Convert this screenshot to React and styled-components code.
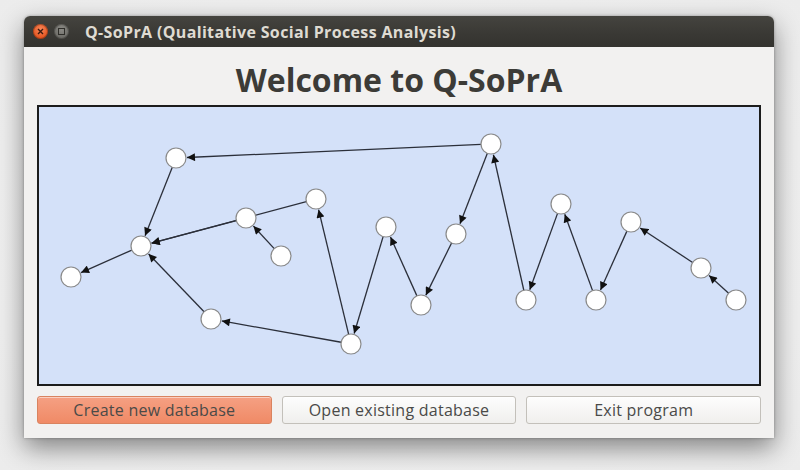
import React from 'react'
import styled, { createGlobalStyle } from 'styled-components'

const GlobalStyle = createGlobalStyle`
  html, body {
    margin: 0;
    padding: 0;
    background: #efefef;
  }
  body {
    font-family: 'Open Sans', 'DejaVu Sans', sans-serif;
  }
`

const nodes = [
  [137, 51],
  [452, 37],
  [207, 111],
  [277, 92],
  [102, 139],
  [242, 149],
  [32, 170],
  [347, 120],
  [417, 127],
  [172, 212],
  [312, 237],
  [382, 198],
  [522, 97],
  [592, 115],
  [487, 193],
  [557, 193],
  [662, 161],
  [697, 193]
]

// pairs of node indexes, arrow drawn at the second one
const edges = [
  [1, 0],
  [0, 4],
  [3, 4],
  [2, 4],
  [5, 2],
  [4, 6],
  [9, 4],
  [10, 9],
  [10, 3],
  [7, 10],
  [11, 7],
  [8, 11],
  [1, 8],
  [14, 1],
  [12, 14],
  [15, 12],
  [13, 15],
  [16, 13],
  [17, 16]
]

const R = 10

const Page = styled.div`
  width: 800px;
  height: 470px;
  box-sizing: border-box;
  padding: 16px 26px 32px 24px;
  background: radial-gradient(ellipse at center, #f4f4f4 0%, #ececec 100%);
`

const Window = styled.div`
  display: flex;
  flex-direction: column;
  height: 100%;
  border-radius: 6px 6px 0 0;
  box-shadow: 0 10px 26px rgba(0, 0, 0, 0.45), 0 0 3px rgba(0, 0, 0, 0.3);
  background: #f2f1f0;
`

const TitleBar = styled.div`
  display: flex;
  align-items: center;
  height: 31px;
  padding: 0 0 0 9px;
  border-radius: 6px 6px 0 0;
  background: linear-gradient(#45443f, #393834 60%, #34332f);
`

const Controls = styled.div`
  display: flex;
  gap: 6px;
  margin-right: 16px;
`

const CircleButton = styled.div`
  width: 15px;
  height: 15px;
  border-radius: 50%;
  display: flex;
  align-items: center;
  justify-content: center;
  background: ${(p) =>
    p.close
      ? 'radial-gradient(circle at 50% 35%, #f7875a, #e4541f 70%, #c7441a)'
      : 'radial-gradient(circle at 50% 35%, #8b8a85, #6c6b66 70%, #55544f)'};
  box-shadow: inset 0 0 0 1px rgba(0, 0, 0, 0.25);
`

const WindowTitle = styled.span`
  color: #dfdbd2;
  font-size: 16px;
  font-weight: 700;
  letter-spacing: 0.35px;
  white-space: nowrap;
`

const Body = styled.div`
  flex: 1;
  display: flex;
  flex-direction: column;
  padding: 0 13px 14px 13px;
`

const Heading = styled.h1`
  margin: 0;
  height: 58px;
  line-height: 66px;
  text-align: center;
  font-size: 32px;
  font-weight: 700;
  color: #3c3b37;
`

const Canvas = styled.div`
  height: 281px;
  box-sizing: border-box;
  border: 2px solid #1c1c1c;
  background: #d4e1f9;
`

const ButtonRow = styled.div`
  display: grid;
  grid-template-columns: repeat(3, 1fr);
  gap: 10px;
  margin-top: 10px;
`

const Button = styled.button`
  height: 28px;
  border-radius: 3px;
  font-family: 'Open Sans', 'DejaVu Sans', sans-serif;
  font-size: 16px;
  letter-spacing: 0.25px;
  color: #4a4a48;
  border: 1px solid ${(p) => (p.primary ? '#d9835f' : '#c3c0ba')};
  background: ${(p) =>
    p.primary
      ? 'linear-gradient(#f5a083, #f08a66)'
      : 'linear-gradient(#fdfdfd, #f0efed)'};
  box-shadow: inset 0 1px 0 rgba(255, 255, 255, 0.5);
  padding: 0;
`

function Graph() {
  return (
    <svg width="720" height="277" viewBox="0 0 720 277">
      <defs>
        <marker
          id="head"
          viewBox="0 0 10 10"
          refX="10"
          refY="5"
          markerWidth="9"
          markerHeight="8"
          markerUnits="userSpaceOnUse"
          orient="auto"
        >
          <path d="M0 0 L10 5 L0 10 z" fill="#111" />
        </marker>
      </defs>
      {edges.map(([a, b], i) => {
        const [x1, y1] = nodes[a]
        const [x2, y2] = nodes[b]
        const len = Math.hypot(x2 - x1, y2 - y1)
        const ux = (x2 - x1) / len
        const uy = (y2 - y1) / len
        return (
          <line
            key={i}
            x1={x1 + ux * R}
            y1={y1 + uy * R}
            x2={x2 - ux * (R + 1)}
            y2={y2 - uy * (R + 1)}
            stroke="#2b2f3a"
            strokeWidth="1.3"
            markerEnd="url(#head)"
          />
        )
      })}
      {nodes.map(([x, y], i) => (
        <circle
          key={i}
          cx={x}
          cy={y}
          r={R}
          fill="#fff"
          stroke="#8a8a8a"
          strokeWidth="1.2"
        />
      ))}
    </svg>
  )
}

export default function App() {
  return (
    <>
      <GlobalStyle />
      <Page>
        <Window>
          <TitleBar>
            <Controls>
              <CircleButton close>
                <svg width="7" height="7" viewBox="0 0 7 7">
                  <path d="M1 1 L6 6 M6 1 L1 6" stroke="#3a1a10" strokeWidth="1.4" />
                </svg>
              </CircleButton>
              <CircleButton>
                <svg width="7" height="7" viewBox="0 0 7 7">
                  <rect x="0.5" y="0.5" width="6" height="6" fill="none" stroke="#2f2e2a" strokeWidth="1" />
                </svg>
              </CircleButton>
            </Controls>
            <WindowTitle>Q-SoPrA (Qualitative Social Process Analysis)</WindowTitle>
          </TitleBar>
          <Body>
            <Heading>Welcome to Q-SoPrA</Heading>
            <Canvas>
              <Graph />
            </Canvas>
            <ButtonRow>
              <Button primary>Create new database</Button>
              <Button>Open existing database</Button>
              <Button>Exit program</Button>
            </ButtonRow>
          </Body>
        </Window>
      </Page>
    </>
  )
}
